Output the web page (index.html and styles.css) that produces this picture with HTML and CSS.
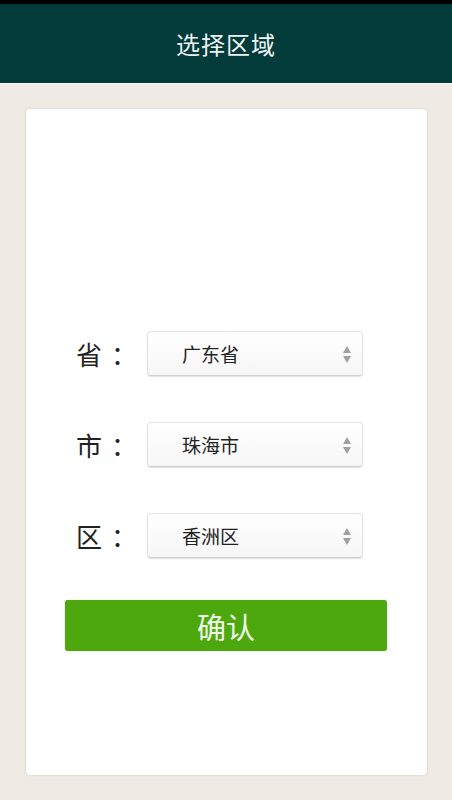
FILE: index.html
```html
<!DOCTYPE html>
<html lang="zh-CN">
<head>
<meta charset="utf-8">
<title>选择区域</title>
<link rel="stylesheet" href="styles.css">
</head>
<body>
<header class="topbar"><h1 class="title">选择区域</h1></header>
<main class="page">
  <section class="card">
    <div class="row">
      <span class="label">省<span class="colon">：</span></span>
      <div class="select"><span class="value">广东省</span>
        <svg class="arrows" width="10" height="22" viewBox="0 0 10 22"><path d="M5 3 L9 10 L1 10 Z" fill="#a0a0a0"/><path d="M1 13 L9 13 L5 20 Z" fill="#a0a0a0"/></svg>
      </div>
    </div>
    <div class="row">
      <span class="label">市<span class="colon">：</span></span>
      <div class="select"><span class="value">珠海市</span>
        <svg class="arrows" width="10" height="22" viewBox="0 0 10 22"><path d="M5 3 L9 10 L1 10 Z" fill="#a0a0a0"/><path d="M1 13 L9 13 L5 20 Z" fill="#a0a0a0"/></svg>
      </div>
    </div>
    <div class="row">
      <span class="label">区<span class="colon">：</span></span>
      <div class="select"><span class="value">香洲区</span>
        <svg class="arrows" width="10" height="22" viewBox="0 0 10 22"><path d="M5 3 L9 10 L1 10 Z" fill="#a0a0a0"/><path d="M1 13 L9 13 L5 20 Z" fill="#a0a0a0"/></svg>
      </div>
    </div>
    <button class="confirm" type="button">确认</button>
  </section>
</main>
</body>
</html>
```
FILE: styles.css
```css
* { box-sizing: border-box; }
html, body { margin: 0; padding: 0; }
body {
  width: 452px;
  height: 800px;
  background: #efebe4;
  font-family: "Noto Sans CJK SC", "Noto Sans", sans-serif;
  overflow: hidden;
}
.topbar {
  height: 84px;
  border-top: 4px solid #000;
  border-bottom: 1px solid #f7f5f1;
  background: #033a3a;
  display: flex;
  align-items: center;
  justify-content: center;
}
.title {
  margin: 0;
  font-size: 24px;
  font-weight: normal;
  color: #eef3f2;
  line-height: 1;
  letter-spacing: 1px;
  padding-top: 1px;
}
.page {
  padding: 24px 24px 0 25px;
}
.card {
  height: 668px;
  background: #fff;
  border: 1px solid #e2ded8;
  border-radius: 5px;
  box-shadow: 0 0 2px rgba(0,0,0,0.06);
  display: flex;
  flex-direction: column;
  padding-top: 222px;
}
.row {
  display: flex;
  align-items: center;
  height: 45px;
  margin-left: 50px;
  margin-bottom: 46px;
}
.row:nth-of-type(3) { margin-bottom: 42px; }
.label {
  width: 71px;
  font-size: 26px;
  color: #222;
  line-height: 1;
  display: flex;
  align-items: center;
}
.colon {
  margin-left: 9px;
  font-size: 26px;
}
.select {
  width: 216px;
  height: 45px;
  border: 1px solid #e3e3e3;
  border-bottom-color: #cfcfcf;
  border-radius: 4px;
  background: linear-gradient(#ffffff, #f6f6f6);
  box-shadow: 0 1px 1px rgba(0,0,0,0.12);
  display: flex;
  align-items: center;
  padding-left: 34px;
  padding-right: 10px;
}
.value {
  font-size: 19px;
  color: #222;
  line-height: 1;
}
.arrows {
  margin-left: auto;
}
.confirm {
  margin: 0 40px 0 39px;
  height: 51px;
  border: none;
  border-radius: 3px;
  background: #4ca80c;
  color: #f2f7ee;
  font-family: "Noto Sans CJK SC", "Noto Sans", sans-serif;
  font-size: 29px;
  line-height: 1;
  padding: 2px 0 0 0;
  box-shadow: 0 0 1px rgba(60,120,10,0.5);
}
```
